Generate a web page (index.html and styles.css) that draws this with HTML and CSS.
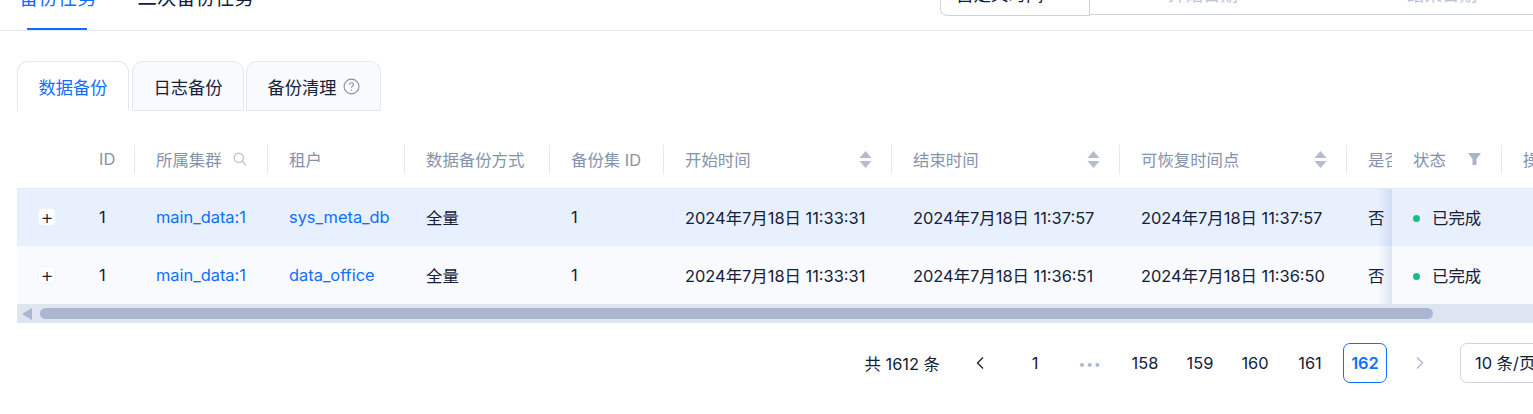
FILE: index.html
```html
<!DOCTYPE html>
<html lang="zh">
<head>
    <meta charset="UTF-8">
    <title>备份任务</title>
    <link rel="stylesheet" href="styles.css">
</head>
<body>
    <div class="top_bar">
        <div class="top_tabs">
            <div class="top_tab active">备份任务</div>
            <div class="top_tab">二次备份任务</div>
        </div>
        <div class="range">
            <div class="range_select">自定义时间</div>
            <div class="range_dates">
                <span>开始日期</span>
                <span>结束日期</span>
            </div>
        </div>
    </div>

    <div class="content">
        <div class="card_tabs">
            <div class="card_tab active">数据备份</div>
            <div class="card_tab">日志备份</div>
            <div class="card_tab wide">备份清理
                <svg class="help" width="17" height="17" viewBox="0 0 17 17" fill="none" stroke="#8592ad" stroke-width="1.1">
                    <circle cx="8.5" cy="8.5" r="7.4"/>
                    <path d="M6.5 6.8c0-1.2.9-2 2-2s2 .8 2 1.8c0 1.5-2 1.5-2 3.2"/>
                    <path d="M8.5 11.4v1.2"/>
                </svg>
            </div>
        </div>

        <table class="task_table">
            <colgroup>
                <col class="c_expand"><col class="c_id"><col class="c_cluster"><col class="c_tenant"><col class="c_method"><col class="c_set"><col class="c_time"><col class="c_time"><col class="c_time2"><col class="c_flag"><col class="c_status"><col class="c_op">
            </colgroup>
            <thead>
                <tr>
                    <th class="no_line"></th>
                    <th>ID</th>
                    <th>
                        <div class="th_inner">所属集群
                            <svg width="14" height="14" viewBox="0 0 14 14" fill="none" stroke="#bcc5d6" stroke-width="1.4"><circle cx="5.8" cy="5.8" r="4.6"/><path d="M9.2 9.2l4 4"/></svg>
                        </div>
                    </th>
                    <th>租户</th>
                    <th>数据备份方式</th>
                    <th>备份集 ID</th>
                    <th><div class="th_inner">开始时间 <svg class="sort" width="13" height="17" viewBox="0 0 13 17" fill="#b4bccd"><path d="M6.5 0l6 7H.5z"/><path d="M6.5 17l6-7H.5z"/></svg></div></th>
                    <th><div class="th_inner">结束时间 <svg class="sort" width="13" height="17" viewBox="0 0 13 17" fill="#b4bccd"><path d="M6.5 0l6 7H.5z"/><path d="M6.5 17l6-7H.5z"/></svg></div></th>
                    <th><div class="th_inner">可恢复时间点 <svg class="sort" width="13" height="17" viewBox="0 0 13 17" fill="#b4bccd"><path d="M6.5 0l6 7H.5z"/><path d="M6.5 17l6-7H.5z"/></svg></div></th>
                    <th class="no_line">是否</th>
                    <th class="fixed">
                        <div class="th_inner">状态
                            <svg width="13" height="12" viewBox="0 0 13 12" fill="#abb3c6"><path d="M0 0h13L8.5 6v6h-4V6z"/></svg>
                        </div>
                    </th>
                    <th class="no_line">操作</th>
                </tr>
            </thead>
            <tbody>
                <tr class="row_hover">
                    <td><span class="expand">+</span></td>
                    <td>1</td>
                    <td class="link">main_data:1</td>
                    <td class="link">sys_meta_db</td>
                    <td>全量</td>
                    <td>1</td>
                    <td>2024年7月18日 11:33:31</td>
                    <td>2024年7月18日 11:37:57</td>
                    <td>2024年7月18日 11:37:57</td>
                    <td>否</td>
                    <td class="fixed"><span class="dot"></span>已完成</td>
                    <td></td>
                </tr>
                <tr>
                    <td><span class="expand">+</span></td>
                    <td>1</td>
                    <td class="link">main_data:1</td>
                    <td class="link">data_office</td>
                    <td>全量</td>
                    <td>1</td>
                    <td>2024年7月18日 11:33:31</td>
                    <td>2024年7月18日 11:36:51</td>
                    <td>2024年7月18日 11:36:50</td>
                    <td>否</td>
                    <td class="fixed"><span class="dot"></span>已完成</td>
                    <td></td>
                </tr>
            </tbody>
        </table>

        <div class="scrollbar">
            <svg width="10" height="12" viewBox="0 0 10 12" fill="#abb7d0"><path d="M10 0v12L0 6z"/></svg>
            <div class="thumb"></div>
        </div>

        <div class="pager">
            <span class="total">共 1612 条</span>
            <span class="page_btn arrow">
                <svg width="10" height="14" viewBox="0 0 10 14" fill="none" stroke="#132039" stroke-width="1.3"><path d="M8 1.5L2.5 7 8 12.5"/></svg>
            </span>
            <span class="page_btn">1</span>
            <span class="page_btn dots">•••</span>
            <span class="page_btn">158</span>
            <span class="page_btn">159</span>
            <span class="page_btn">160</span>
            <span class="page_btn">161</span>
            <span class="page_btn current">162</span>
            <span class="page_btn arrow">
                <svg width="10" height="14" viewBox="0 0 10 14" fill="none" stroke="#abb7d0" stroke-width="1.3"><path d="M2 1.5L7.5 7 2 12.5"/></svg>
            </span>
            <span class="page_size">10 条/页</span>
        </div>
    </div>
</body>
</html>
```

FILE: styles.css
```css
* {
    box-sizing: border-box;
}

body {
    margin: 0;
    width: 1533px;
    height: 414px;
    overflow: hidden;
    background: white;
    color: #132039;
    font-family: Inter, "Noto Sans CJK SC", sans-serif;
    font-size: 16.4px;
}

.top_bar {
    display: flex;
    justify-content: space-between;
    height: 31px;
    border-bottom: 1px solid #e2e8f4;
    overflow: hidden;
}

.top_tabs {
    display: flex;
    gap: 41px;
    padding-left: 19px;
}

.top_tab {
    position: relative;
    height: 30px;
    padding-top: 0;
    margin-top: -16px;
    height: 46px;
    line-height: 28px;
    font-size: 19.4px;
}

.top_tab.active {
    color: #0f6fff;
}

.top_tab.active::after {
    content: "";
    position: absolute;
    left: 8px;
    right: 10px;
    bottom: 0;
    height: 2px;
    background: #0f6fff;
}

.range {
    display: flex;
    width: 593px;
    height: 16px;
    flex: none;
}

.range_select {
    width: 150px;
    height: 16px;
    border: 1px solid #ccd5e6;
    border-top: 0;
    border-radius: 0 0 0 7px;
    padding-left: 15px;
    display: flex;
    align-items: flex-end;
    padding-bottom: 8px;
    line-height: 24px;
    font-size: 17.5px;
}

.range_dates {
    flex: 1;
    height: 15px;
    border-bottom: 1px solid #ccd5e6;
    display: flex;
    align-items: flex-end;
    padding: 0 56px 7px 78px;
    justify-content: space-between;
    color: #bcc5d6;
    font-size: 17.5px;
    line-height: 24px;
}

.content {
    padding: 30px 0 0 17px;
}

.card_tabs {
    display: flex;
    gap: 3px;
    height: 50px;
}

.card_tab {
    display: flex;
    align-items: center;
    justify-content: center;
    gap: 6px;
    width: 112px;
    border: 1px solid #e2e8f4;
    border-radius: 11px 11px 0 0;
    background: #f8fafe;
    font-size: 17.3px;
}

.card_tab.active {
    background: white;
    color: #0f6fff;
    border-bottom-color: white;
}

.card_tab.wide {
    width: 135px;
    margin-left: -1px;
}

.task_table {
    width: 1570px;
    margin-top: 20px;
    table-layout: fixed;
    border-collapse: collapse;
}

.c_expand { width: 61px; }
.c_id { width: 57px; }
.c_cluster { width: 133px; }
.c_tenant { width: 137px; }
.c_method { width: 145px; }
.c_set { width: 114px; }
.c_time { width: 228px; }
.c_time2 { width: 227px; }
.c_flag { width: 45px; }
.c_status { width: 110px; }
.c_op { width: 85px; }

.task_table th {
    position: relative;
    height: 57px;
    padding: 0 21px;
    text-align: left;
    font-weight: normal;
    color: #8592ad;
    border-bottom: 1px solid #e2e8f4;
    white-space: nowrap;
    overflow: hidden;
    background: white;
}

.task_table th::after {
    content: "";
    position: absolute;
    right: 0;
    top: 14px;
    bottom: 14px;
    width: 1px;
    background: #e2e8f4;
}

.task_table th.no_line::after {
    display: none;
}

.task_table th.fixed {
    overflow: visible;
}

.task_table td {
    height: 58px;
    padding: 0 21px;
    white-space: nowrap;
    overflow: hidden;
    background: #f8fafe;
}

.task_table .row_hover td {
    background: #e8f0fe;
}

.task_table td.fixed {
    position: relative;
    overflow: visible;
}

.task_table td.fixed::before {
    content: "";
    position: absolute;
    left: -14px;
    top: 0;
    bottom: 0;
    width: 14px;
    background: linear-gradient(90deg, rgba(90, 120, 190, 0), rgba(90, 120, 190, 0.16));
}

.th_inner {
    display: flex;
    justify-content: space-between;
    align-items: center;
}

.sort {
    margin-right: -1px;
}

.link {
    color: #0f6fff;
}

.expand {
    display: flex;
    align-items: center;
    justify-content: center;
    width: 18px;
    height: 18px;
    border-radius: 5px;
    background: white;
    border: 1px solid #eef1f8;
    line-height: 16px;
    font-size: 20px;
    font-weight: 300;
}

.dot {
    display: inline-block;
    width: 7px;
    height: 7px;
    border-radius: 50%;
    background: #14c184;
    margin-right: 12px;
    vertical-align: 2px;
}

.scrollbar {
    display: flex;
    align-items: center;
    gap: 8px;
    height: 19px;
    padding-left: 5px;
    background: #dfe5f0;
}

.thumb {
    width: 1393px;
    height: 11px;
    border-radius: 6px;
    background: #abb7d0;
}

.pager {
    display: flex;
    align-items: center;
    justify-content: flex-end;
    margin-top: 20px;
    margin-right: -47px;
    height: 40px;
    gap: 11px;
}

.total {
    margin-right: 7px;
}

.page_btn {
    display: flex;
    align-items: center;
    justify-content: center;
    width: 44px;
    height: 40px;
    border-radius: 7px;
}

.page_btn.dots {
    color: #abb7d0;
    letter-spacing: 1px;
    font-size: 12px;
}

.page_btn.current {
    border: 1px solid #0f6fff;
    color: #0f6fff;
    font-weight: 600;
}

.page_size {
    width: 120px;
    height: 40px;
    margin-left: 7px;
    padding-left: 14px;
    line-height: 38px;
    white-space: nowrap;
    border: 1px solid #ccd5e6;
    border-radius: 7px;
}
```
